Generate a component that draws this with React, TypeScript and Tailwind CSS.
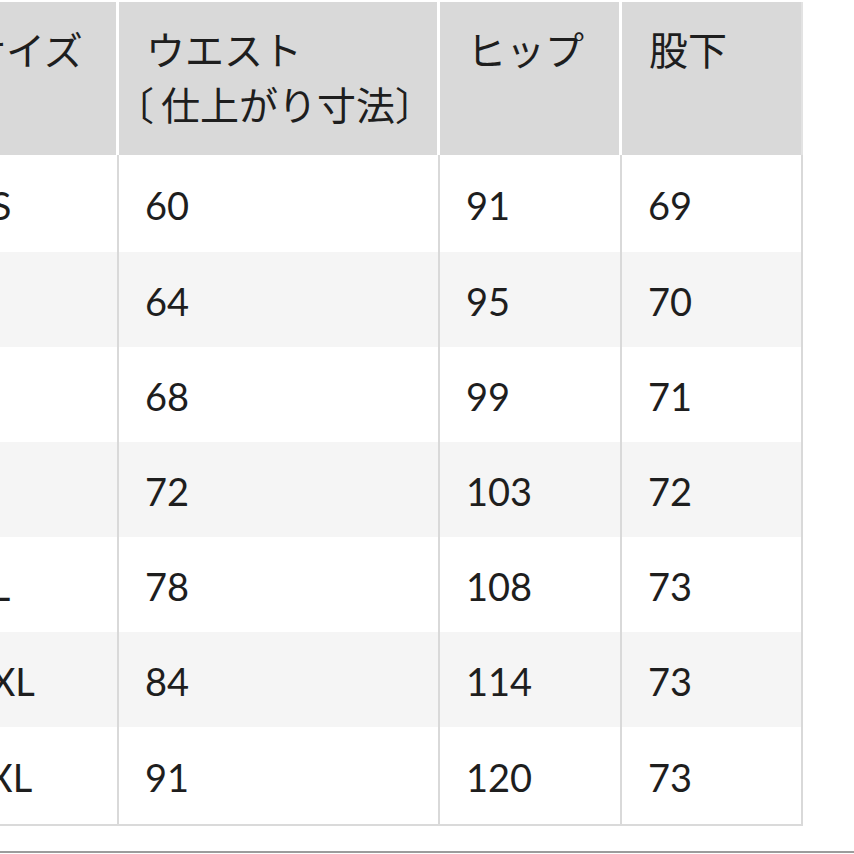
const header = ['サイズ', 'ウエスト', 'ヒップ', '股下']

const rows = [
  ['XS', '60', '91', '69'],
  ['S', '64', '95', '70'],
  ['M', '68', '99', '71'],
  ['L', '72', '103', '72'],
  ['XL', '78', '108', '73'],
  ['XXL', '84', '114', '73'],
  ['3XL', '91', '120', '73'],
]

// 列幅（左端の列は画面外にはみ出している）
const widths = ['w-[179px]', 'w-[321px]', 'w-[182px]', 'w-[181px]']
const heights = ['h-[97px]', 'h-[95px]', 'h-[95px]', 'h-[95px]', 'h-[95px]', 'h-[95px]', 'h-[97px]']

export default function App() {
  return (
    <div
      className="w-[854px] h-[854px] bg-white overflow-hidden text-[#1e1e1e]"
      style={{ fontFamily: 'Lato, "Noto Sans CJK JP", sans-serif' }}
    >
      <div className="ml-[-60px] pt-[2px] w-[863px]">
        {/* ヘッダー */}
        <div className="flex h-[153px] bg-[#d9d9d9]">
          {header.map((h, i) => (
            <div
              key={i}
              className={`${widths[i]} shrink-0 pl-[27px] pt-[21px] text-[39px] leading-[55px] whitespace-nowrap ${
                i < 3 ? 'border-r-[3px] border-white' : 'border-r-2 border-[#e3e3e3]'
              }`}
            >
              {h}
              {i === 1 && (
                <div>
                  <span className="inline-block w-[15px]">
                    <span className="ml-[-31px]">〔</span>
                  </span>
                  仕上がり寸法〕
                </div>
              )}
            </div>
          ))}
        </div>

        {/* 本体 */}
        <div className="border-b-2 border-[#dadada]">
          {rows.map((r, ri) => (
            <div key={ri} className={`flex ${heights[ri]} ${ri % 2 === 1 ? 'bg-[#f5f5f5]' : 'bg-white'}`}>
              {r.map((c, ci) => (
                <div
                  key={ci}
                  className={`${widths[ci]} shrink-0 flex items-center pl-[26px] pt-[4px] text-[38px] border-r-2 border-[#d9d9d9]`}
                >
                  {c}
                </div>
              ))}
            </div>
          ))}
        </div>
      </div>

      {/* 下の区切り線 */}
      <div className="mt-[25px] h-[2px] bg-[#9c9c9c]" />
    </div>
  )
}
